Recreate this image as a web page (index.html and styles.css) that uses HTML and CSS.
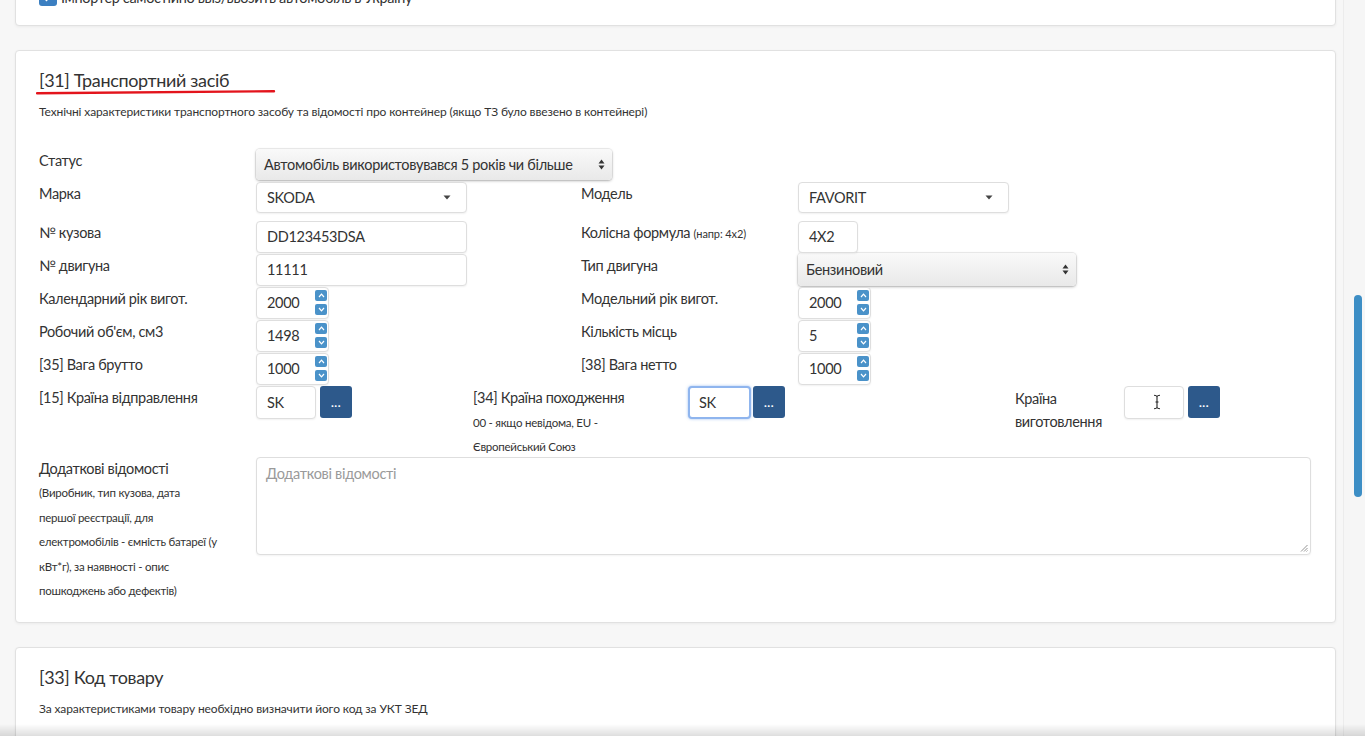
FILE: index.html
```html
<!DOCTYPE html>
<html lang="uk">
<head>
<meta charset="utf-8">
<title>Транспортний засіб</title>
<link rel="stylesheet" href="styles.css">
</head>
<body>
<div class="page">
  <section class="card card-top">
    <div class="check-row">
      <span class="checkbox"><svg width="12" height="12" viewBox="0 0 12 12"><path d="M2 6.5l2.5 2.5L10 3" fill="none" stroke="#fff" stroke-width="2"/></svg></span>
      <span class="check-text">Імпортер самостійно ввіз/ввозить автомобіль в Україну</span>
    </div>
  </section>

  <section class="card">
    <h3 class="card-title">[31] Транспортний засіб<svg class="underline" width="240" height="6" viewBox="0 0 240 6"><path d="M1 4.2 C60 3.6 140 3 238 2.2" fill="none" stroke="#e3141c" stroke-width="2.4" stroke-linecap="round"/></svg></h3>
    <p class="card-desc">Технічні характеристики транспортного засобу та відомості про контейнер (якщо ТЗ було ввезено в контейнері)</p>

    <div class="form">
      <div class="row">
        <div class="group">
          <div class="lbl">Статус</div>
          <div class="select select-gray w-status"><span>Автомобіль використовувався 5 років чи більше</span><svg class="updown" width="7" height="11" viewBox="0 0 7 11"><path d="M3.5 0.5L6.5 4.5H0.5Z M3.5 10.5L0.5 6.5H6.5Z" fill="#333"/></svg></div>
        </div>
      </div>

      <div class="row row-tall">
        <div class="group half">
          <div class="lbl">Марка</div>
          <div class="select select-white w-wide"><span>SKODA</span><svg class="caret" width="8" height="5" viewBox="0 0 8 5"><path d="M0.5 0.5H7.5L4 4.5Z" fill="#444"/></svg></div>
        </div>
        <div class="group half">
          <div class="lbl">Модель</div>
          <div class="select select-white w-wide"><span>FAVORIT</span><svg class="caret" width="8" height="5" viewBox="0 0 8 5"><path d="M0.5 0.5H7.5L4 4.5Z" fill="#444"/></svg></div>
        </div>
      </div>

      <div class="row">
        <div class="group half">
          <div class="lbl">№ кузова</div>
          <div class="input w-wide">DD123453DSA</div>
        </div>
        <div class="group half">
          <div class="lbl">Колісна формула <small>(напр: 4x2)</small></div>
          <div class="input w-xs">4X2</div>
        </div>
      </div>

      <div class="row">
        <div class="group half">
          <div class="lbl">№ двигуна</div>
          <div class="input w-wide">11111</div>
        </div>
        <div class="group half">
          <div class="lbl">Тип двигуна</div>
          <div class="select select-gray w-engine"><span>Бензиновий</span><svg class="updown" width="7" height="11" viewBox="0 0 7 11"><path d="M3.5 0.5L6.5 4.5H0.5Z M3.5 10.5L0.5 6.5H6.5Z" fill="#333"/></svg></div>
        </div>
      </div>

      <div class="row">
        <div class="group half">
          <div class="lbl">Календарний рік вигот.</div>
          <div class="input num">2000<span class="spin"><span class="sb"><svg width="7" height="5" viewBox="0 0 7 5"><path d="M1 4L3.5 1.2L6 4" fill="none" stroke="#fff" stroke-width="1.2"/></svg></span><span class="sb"><svg width="7" height="5" viewBox="0 0 7 5"><path d="M1 1L3.5 3.8L6 1" fill="none" stroke="#fff" stroke-width="1.2"/></svg></span></span></div>
        </div>
        <div class="group half">
          <div class="lbl">Модельний рік вигот.</div>
          <div class="input num">2000<span class="spin"><span class="sb"><svg width="7" height="5" viewBox="0 0 7 5"><path d="M1 4L3.5 1.2L6 4" fill="none" stroke="#fff" stroke-width="1.2"/></svg></span><span class="sb"><svg width="7" height="5" viewBox="0 0 7 5"><path d="M1 1L3.5 3.8L6 1" fill="none" stroke="#fff" stroke-width="1.2"/></svg></span></span></div>
        </div>
      </div>

      <div class="row">
        <div class="group half">
          <div class="lbl">Робочий об'єм, см3</div>
          <div class="input num">1498<span class="spin"><span class="sb"><svg width="7" height="5" viewBox="0 0 7 5"><path d="M1 4L3.5 1.2L6 4" fill="none" stroke="#fff" stroke-width="1.2"/></svg></span><span class="sb"><svg width="7" height="5" viewBox="0 0 7 5"><path d="M1 1L3.5 3.8L6 1" fill="none" stroke="#fff" stroke-width="1.2"/></svg></span></span></div>
        </div>
        <div class="group half">
          <div class="lbl">Кількість місць</div>
          <div class="input num">5<span class="spin"><span class="sb"><svg width="7" height="5" viewBox="0 0 7 5"><path d="M1 4L3.5 1.2L6 4" fill="none" stroke="#fff" stroke-width="1.2"/></svg></span><span class="sb"><svg width="7" height="5" viewBox="0 0 7 5"><path d="M1 1L3.5 3.8L6 1" fill="none" stroke="#fff" stroke-width="1.2"/></svg></span></span></div>
        </div>
      </div>

      <div class="row">
        <div class="group half">
          <div class="lbl">[35] Вага брутто</div>
          <div class="input num">1000<span class="spin"><span class="sb"><svg width="7" height="5" viewBox="0 0 7 5"><path d="M1 4L3.5 1.2L6 4" fill="none" stroke="#fff" stroke-width="1.2"/></svg></span><span class="sb"><svg width="7" height="5" viewBox="0 0 7 5"><path d="M1 1L3.5 3.8L6 1" fill="none" stroke="#fff" stroke-width="1.2"/></svg></span></span></div>
        </div>
        <div class="group half">
          <div class="lbl">[38] Вага нетто</div>
          <div class="input num">1000<span class="spin"><span class="sb"><svg width="7" height="5" viewBox="0 0 7 5"><path d="M1 4L3.5 1.2L6 4" fill="none" stroke="#fff" stroke-width="1.2"/></svg></span><span class="sb"><svg width="7" height="5" viewBox="0 0 7 5"><path d="M1 1L3.5 3.8L6 1" fill="none" stroke="#fff" stroke-width="1.2"/></svg></span></span></div>
        </div>
      </div>

      <div class="row row-country">
        <div class="group g1">
          <div class="lbl">[15] Країна відправлення</div>
          <div class="combo"><div class="input w-country">SK</div><span class="btn-dots">...</span></div>
        </div>
        <div class="group g2">
          <div class="lbl lbl-g2">[34] Країна походження<span class="sub">00 - якщо невідома, EU -<br>Європейський Союз</span></div>
          <div class="combo"><div class="input w-country focus">SK</div><span class="btn-dots">...</span></div>
        </div>
        <div class="group g3">
          <div class="lbl lbl-g3">Країна виготовлення</div>
          <div class="combo"><div class="input w-country cursor-host"><svg class="ibeam" width="8" height="16" viewBox="0 0 8 16"><path d="M1 1.2C2.5 1.2 3.6 1.6 4 2.6C4.4 1.6 5.5 1.2 7 1.2M4 2.6V13.4M1 14.8C2.5 14.8 3.6 14.4 4 13.4C4.4 14.4 5.5 14.8 7 14.8M2.5 8H5.5" fill="none" stroke="#222" stroke-width="1.1"/></svg></div><span class="btn-dots">...</span></div>
        </div>
      </div>

      <div class="row row-notes">
        <div class="group">
          <div class="lbl">Додаткові відомості<span class="sub sub-notes">(Виробник, тип кузова, дата<br>першої реєстрації, для<br>електромобілів - ємність батареї (у<br>кВт*г), за наявності - опис<br>пошкоджень або дефектів)</span></div>
          <div class="textarea"><span class="placeholder">Додаткові відомості</span><svg class="grip" width="8" height="8" viewBox="0 0 8 8"><path d="M7.5 1L1 7.5M7.5 4L4 7.5M7.5 6.5L6.5 7.5" stroke="#888" stroke-width="0.9"/></svg></div>
        </div>
      </div>
    </div>
  </section>

  <section class="card">
    <h3 class="card-title">[33] Код товару</h3>
    <p class="card-desc">За характеристиками товару необхідно визначити його код за УКТ ЗЕД</p>
    <div class="spacer"></div>
  </section>
</div>

<div class="scrollbar"><div class="thumb"></div></div>
<div class="bottom-shade"></div>
</body>
</html>
```

FILE: styles.css
```css
* { box-sizing: border-box; }

html, body {
  height: 100%;
}

body {
  margin: 0;
  background: #f7f7f7;
  font-family: Lato, "Open Sans", sans-serif;
  color: #333;
  overflow: hidden;
}

.page {
  width: 1321px;
  margin: -33px 0 0 15px;
  display: flex;
  flex-direction: column;
  gap: 24px;
}

.card {
  background: #fff;
  border: 1px solid #e1e1e1;
  border-radius: 4px;
  box-shadow: 0 1px 3px rgba(0, 0, 0, 0.05);
  padding: 17px 24px 18px 23px;
}

.card-top {
  padding: 18px 24px 17px 23px;
}

.check-row {
  display: flex;
  align-items: center;
  gap: 4px;
  height: 22px;
  font-size: 14.5px;
  letter-spacing: -0.35px;
}

.checkbox {
  width: 18px;
  height: 18px;
  border-radius: 3px;
  background: #3b7fc1;
  display: flex;
  align-items: center;
  justify-content: center;
}

.card-title {
  position: relative;
  margin: 0;
  font-size: 18px;
  font-weight: 400;
  line-height: 24px;
  letter-spacing: -0.35px;
  color: #333;
}

.underline {
  position: absolute;
  left: -3px;
  top: 21px;
}

.card-desc {
  margin: 11px 0 0;
  font-size: 12px;
  line-height: 18px;
  letter-spacing: -0.12px;
  color: #333;
}

.form {
  margin-top: 28px;
  display: flex;
  flex-direction: column;
}

.row {
  display: flex;
  height: 33px;
}

.row-tall {
  height: 39px;
}

.row-country {
  height: 71px;
}

.row-notes {
  height: auto;
}

.group {
  display: flex;
  align-items: flex-start;
}

.half {
  width: 542px;
}

.g1 { width: 434px; }
.g2 { width: 542px; }

.lbl {
  width: 217px;
  flex: none;
  font-size: 14.5px;
  letter-spacing: -0.35px;
  line-height: 22px;
  padding-top: 1px;
  padding-right: 14px;
  color: #333;
}

.lbl small {
  font-size: 11px;
  letter-spacing: -0.1px;
}

.lbl-g2 { width: 215px; }
.lbl-g3 { width: 109px; line-height: 23px; }

.sub {
  display: block;
  font-size: 11.5px;
  letter-spacing: -0.25px;
  line-height: 24px;
  padding-top: 2px;
}

.sub-notes {
  line-height: 24.5px;
  padding-top: 1px;
}

.input {
  position: relative;
  height: 32px;
  border: 1px solid #dedede;
  border-radius: 4px;
  background: #fff;
  box-shadow: 0 1px 2px rgba(0, 0, 0, 0.06);
  font-size: 14.5px;
  letter-spacing: -0.3px;
  line-height: 30px;
  padding: 0 10px;
  color: #333;
}

.w-wide { width: 211px; }
.w-xs { width: 60px; }
.w-country { width: 60px; height: 33px; line-height: 31px; }

.num {
  width: 73px;
}

.spin {
  position: absolute;
  right: 1px;
  top: 2px;
  display: flex;
  flex-direction: column;
  gap: 3px;
}

.sb {
  width: 12px;
  height: 11px;
  border-radius: 2px;
  background: #4a92c9;
  display: flex;
  align-items: center;
  justify-content: center;
}

.select {
  display: flex;
  align-items: center;
  justify-content: space-between;
  height: 31px;
  border-radius: 4px;
  font-size: 14.5px;
  letter-spacing: -0.3px;
  color: #333;
}

.select-gray {
  background: linear-gradient(#f9f9f9, #e9e9e9);
  box-shadow: 0 0 0 1px rgba(0, 0, 0, 0.06), 0 1px 3px rgba(0, 0, 0, 0.28);
  padding: 0 7px 0 8px;
}

.select-white {
  background: #fff;
  border: 1px solid #dedede;
  box-shadow: 0 1px 2px rgba(0, 0, 0, 0.06);
  padding: 0 15px 0 10px;
}

.w-status { width: 356px; }
.w-engine { width: 278px; margin-top: -1px; height: 33px; }

.combo {
  display: flex;
  align-items: flex-start;
  gap: 4px;
}

.focus {
  width: 63px;
  border: 2px solid #8fb5ee;
  box-shadow: 0 0 3px rgba(80, 140, 230, 0.55);
  line-height: 29px;
  padding: 0 9px;
}

.g2 .combo { gap: 2px; }

.btn-dots {
  width: 32px;
  height: 32px;
  border-radius: 3px;
  background: #2d598b;
  color: #fff;
  font-size: 12px;
  font-weight: 700;
  line-height: 34px;
  text-align: center;
  letter-spacing: 0.5px;
}

.cursor-host .ibeam {
  position: absolute;
  left: 28px;
  top: 7px;
}

.textarea {
  position: relative;
  width: 1055px;
  height: 98px;
  border: 1px solid #dedede;
  border-radius: 4px;
  background: #fff;
  box-shadow: 0 1px 2px rgba(0, 0, 0, 0.05);
  padding: 5px 9px;
  font-size: 14.5px;
  letter-spacing: -0.3px;
  line-height: 22px;
}

.placeholder {
  color: #9a9a9a;
}

.grip {
  position: absolute;
  right: 2px;
  bottom: 2px;
}

.spacer {
  height: 40px;
}

.scrollbar {
  position: fixed;
  top: 0;
  right: 0;
  width: 22px;
  height: 100%;
  background: #f6f6f6;
  border-left: 1px solid #ececec;
}

.thumb {
  position: absolute;
  left: 10px;
  top: 295px;
  width: 8px;
  height: 202px;
  border-radius: 4px;
  background: #3d8ec5;
}

.bottom-shade {
  position: fixed;
  left: 0;
  right: 0;
  bottom: 0;
  height: 12px;
  background: linear-gradient(rgba(0, 0, 0, 0), rgba(0, 0, 0, 0.13));
}
```
